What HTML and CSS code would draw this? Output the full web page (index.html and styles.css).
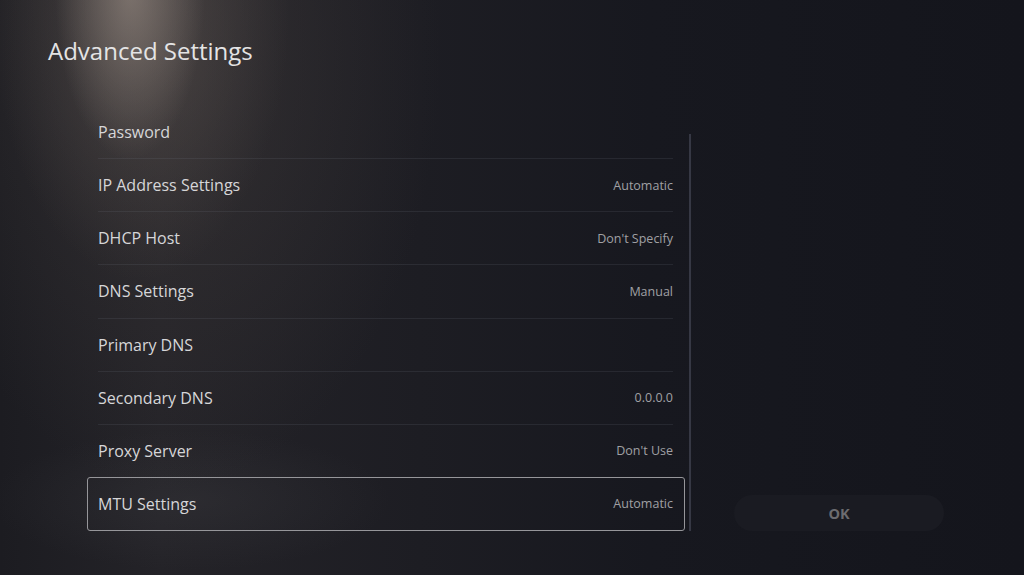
FILE: index.html
```html
<!DOCTYPE html>
<html lang="en">
<head>
  <meta charset="utf-8">
  <title>Advanced Settings</title>
  <link rel="stylesheet" href="styles.css">
</head>
<body>
  <div class="screen">
    <h1 class="title">Advanced Settings</h1>

    <div class="content">
      <ul class="settings-list">
        <li class="setting"><span class="label">Password</span></li>
        <li class="setting"><span class="label">IP Address Settings</span><span class="value">Automatic</span></li>
        <li class="setting"><span class="label">DHCP Host</span><span class="value">Don't Specify</span></li>
        <li class="setting"><span class="label">DNS Settings</span><span class="value">Manual</span></li>
        <li class="setting"><span class="label">Primary DNS</span></li>
        <li class="setting"><span class="label">Secondary DNS</span><span class="value">0.0.0.0</span></li>
        <li class="setting"><span class="label">Proxy Server</span><span class="value">Don't Use</span></li>
        <li class="setting selected"><span class="label">MTU Settings</span><span class="value">Automatic</span></li>
      </ul>

      <div class="scroll-track"></div>

      <div class="actions">
        <button class="ok-button">OK</button>
      </div>
    </div>
  </div>
</body>
</html>
```

FILE: styles.css
```css
html, body {
  margin: 0;
  padding: 0;
  width: 1024px;
  height: 575px;
  overflow: hidden;
  font-family: "Open Sans", "Noto Sans", sans-serif;
}

/* dark backdrop with a soft spotlight falling from the top left */
.screen {
  height: 575px;
  box-sizing: border-box;
  background-color: #16171e;
  background-image:
    radial-gradient(ellipse 75px 170px at 130px -10px, rgba(150, 138, 130, 0.65), rgba(150, 138, 130, 0) 100%),
    radial-gradient(ellipse 150px 280px at 140px 0px, rgba(110, 100, 95, 0.42), rgba(110, 100, 95, 0) 100%),
    radial-gradient(ellipse 270px 430px at 170px 60px, rgba(70, 64, 62, 0.45), rgba(70, 64, 62, 0) 100%),
    radial-gradient(ellipse 200px 70px at 190px 500px, rgba(70, 70, 74, 0.25), rgba(70, 70, 74, 0) 100%),
    linear-gradient(90deg, #1c1c21 0px, #242328 160px, #1d1d23 420px, #17181f 650px, #14151c 1024px);
}

.title {
  margin: 0;
  padding: 33px 0 0 48px;
  font-size: 24px;
  font-weight: 400;
  line-height: 36px;
  color: #e4e4e4;
}

.content {
  display: flex;
  padding: 37px 0 0 87px;
}

.settings-list {
  list-style: none;
  margin: 0;
  padding: 0;
  width: 598px;
}

.setting {
  display: flex;
  justify-content: space-between;
  align-items: center;
  height: 53.15px;
  margin: 0 12px 0 11px;
  box-sizing: border-box;
  border-bottom: 1px solid rgba(120, 122, 135, 0.16);
}

.setting.selected {
  margin: -1px 0 0 0;
  height: 54px;
  padding: 0 11px 0 10px;
  border: 1.5px solid #96969a;
  border-radius: 3px;
}

.label {
  font-size: 16px;
  color: #d6d6d8;
}

.value {
  font-size: 12.5px;
  color: #a0a0a4;
}

.scroll-track {
  width: 2px;
  height: 397px;
  margin: 28px 0 0 4px;
  background: #363844;
}

.actions {
  display: flex;
  align-items: flex-end;
  margin-left: 43px;
}

.ok-button {
  width: 210px;
  height: 36px;
  border: none;
  border-radius: 18px;
  background: #1a1b22;
  color: #6c6c70;
  font-family: "Open Sans", "Noto Sans", sans-serif;
  font-size: 14.5px;
  font-weight: 700;
}
```
